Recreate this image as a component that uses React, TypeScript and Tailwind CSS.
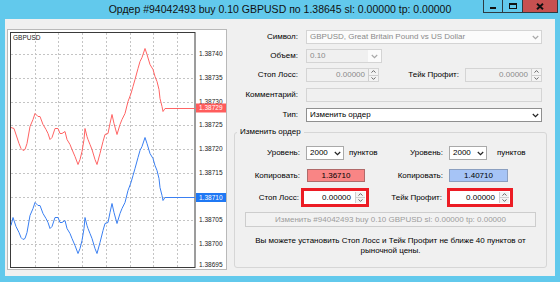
import type { ReactNode } from 'react';

// MT4 "modify order" dialog, scaled down

const blue: [number, number][] = [
    [11, 225], [13, 217], [16, 226], [19, 232], [21, 237], [23, 239], [25, 238], [27, 232],
    [30, 215], [33, 208], [35, 202], [38, 205], [40, 205], [43, 213], [46, 218], [48, 222],
    [50, 228], [52, 226], [55, 217], [58, 217], [60, 222], [62, 222], [65, 220], [67, 228],
    [70, 233], [72, 238], [75, 245], [78, 253], [80, 248], [82, 240], [84, 228], [85, 217],
    [87, 225], [88, 228], [90, 233], [92, 238], [95, 248], [97, 253], [100, 242], [103, 230],
    [105, 223], [108, 222], [110, 212], [112, 203], [114, 212], [117, 223], [120, 213],
    [122, 208], [125, 202], [128, 190], [131, 182], [133, 175], [135, 168], [138, 157],
    [140, 150], [142, 146], [145, 137], [147, 143], [150, 153], [153, 158], [155, 165],
    [157, 170], [159, 178], [160, 187], [162, 195], [163, 200], [165, 197], [195, 197],
];

const red: [number, number][] = [[11, 127], [14, 128], ...blue.slice(3).map(([x, y]) => [x, y - 89] as [number, number])];

const toPath = (pts: [number, number][]) =>
    pts.map(([x, y], i) => `${i === 0 ? 'M' : 'L'}${x} ${y + 0.5}`).join(' ');

const vLines = [35, 58, 82, 106, 130, 153, 177];
const hLines: [number, string][] = [
    [54, '1.38740'],
    [78, '1.38735'],
    [102, '1.38730'],
    [125, '1.38725'],
    [149, '1.38720'],
    [173, '1.38715'],
    [197, ''],
    [220, '1.38705'],
    [244, '1.38700'],
];

function ChartPanel() {
    return (
        <div className="ml-[2px] mt-[10px] h-[241px] w-[220px] border border-[#b9b9b9] bg-white">
            <svg width="218" height="239" viewBox="0 0 218 239" className="block">
                <g transform="translate(-8 -30)" fontFamily="'Liberation Sans', Arial, sans-serif" fontSize="6.5">
                    {vLines.map((x) => (
                        <line key={x} x1={x + 0.5} y1={33} x2={x + 0.5} y2={267} stroke="#c4c4c4" strokeDasharray="2 2" />
                    ))}
                    {hLines.map(([y]) => (
                        <line key={y} x1={11} y1={y + 0.5} x2={195} y2={y + 0.5} stroke="#c4c4c4" strokeDasharray="2 2" />
                    ))}
                    <rect x={10.5} y={32.5} width={184.5} height={235} fill="none" stroke="#3a3a3a" />
                    {hLines.map(([y, label]) =>
                        label ? (
                            <text key={label} x={199} y={y + 2.4} fill="#222">
                                {label}
                            </text>
                        ) : null,
                    )}
                    <text x={199} y={267.4} fill="#222">1.38695</text>
                    <text x={13} y={39.5} fill="#222">GBPUSD</text>

                    <path d={toPath(red)} fill="none" stroke="#ff6464" strokeWidth="1" />
                    <path d={toPath(blue)} fill="none" stroke="#3a7ff2" strokeWidth="1" />

                    <rect x={196} y={103.5} width={30} height={9} fill="#ff5c5c" />
                    <text x={199} y={110.4} fill="#fff">1.38729</text>
                    <rect x={196} y={193} width={30} height={9} fill="#1f78f4" />
                    <text x={199} y={199.9} fill="#fff">1.38710</text>
                </g>
            </svg>
        </div>
    );
}

function Chevron({ color = '#333' }: { color?: string }) {
    return (
        <svg width="7" height="5" viewBox="0 0 7 5">
            <path d="M0.8 1 L3.5 3.7 L6.2 1" fill="none" stroke={color} strokeWidth="1.2" />
        </svg>
    );
}

function Arrow({ up }: { up?: boolean }) {
    return (
        <svg width="5" height="3" viewBox="0 0 5 3">
            <path d={up ? 'M0.5 2.6 L2.5 0.6 L4.5 2.6' : 'M0.5 0.4 L2.5 2.4 L4.5 0.4'} fill="none" stroke="#555" strokeWidth="0.9" />
        </svg>
    );
}

function Spinner() {
    return (
        <div className="flex h-full w-[10px] flex-col border-l border-[#cfcfcf]">
            <div className="flex flex-1 items-center justify-center border-b border-[#cfcfcf] bg-[#f3f3f3]">
                <Arrow up />
            </div>
            <div className="flex flex-1 items-center justify-center bg-[#f3f3f3]">
                <Arrow />
            </div>
        </div>
    );
}

function Label({ children, w }: { children: ReactNode; w: string }) {
    return <div className={`${w} shrink-0 whitespace-nowrap text-right`}>{children}</div>;
}

function TitleBar() {
    return (
        <div className="grid h-[19px] grid-cols-[1fr_auto_1fr] items-center">
            <div />
            <div className="whitespace-nowrap pb-[1px] text-[10.5px] leading-none text-[#111]">
                Ордер #94042493 buy 0.10 GBPUSD по 1.38645 sl: 0.00000 tp: 0.00000
            </div>
            <div className="flex justify-end self-start pr-[2px]">
                <div className="flex h-[13px] w-[20px] items-end justify-center border border-t-0 border-[#2e3b42] pb-[3px]">
                    <div className="h-[2px] w-[6px] bg-[#111]" />
                </div>
                <div className="flex h-[13px] w-[20px] items-center justify-center border-b border-r border-[#2e3b42]">
                    <div className="h-[6px] w-[8px] border border-t-2 border-[#111]" />
                </div>
                <div className="flex h-[13px] w-[35px] items-center justify-center border-b border-r border-[#2e3b42] bg-[#c75050]">
                    <svg width="8" height="7" viewBox="0 0 8 7">
                        <path d="M1 0.8 L7 6.2 M7 0.8 L1 6.2" stroke="#111" strokeWidth="1.9" />
                    </svg>
                </div>
            </div>
        </div>
    );
}

function OrderForm() {
    return (
        <div className="flex flex-1 flex-col text-[8px] leading-none">
            <div className="mt-[11px] flex h-[14px] items-center">
                <Label w="w-[71px]">Символ:</Label>
                <div className="ml-[8px] flex h-full w-[236px] items-center justify-between border border-[#d4d4d4] bg-[#fbfbfb] pl-[3px] pr-[2px] text-[#8a8a8a]">
                    <span>GBPUSD, Great Britain Pound vs US Dollar</span>
                    <Chevron color="#a8a8a8" />
                </div>
            </div>

            <div className="mt-[5px] flex h-[14px] items-center">
                <Label w="w-[71px]">Объем:</Label>
                <div className="ml-[8px] flex h-full w-[76px] items-center border border-[#d4d4d4] bg-[#fbfbfb] text-[#8a8a8a]">
                    <div className="flex h-full flex-1 items-center bg-[#f0f0f0] pl-[3px]">0.10</div>
                    <div className="flex h-full w-[13px] items-center justify-center">
                        <Chevron color="#a8a8a8" />
                    </div>
                </div>
            </div>

            <div className="mt-[5px] flex h-[14px] items-center">
                <Label w="w-[71px]">Стоп Лосс:</Label>
                <div className="ml-[8px] flex h-full w-[73px] items-center border border-[#d4d4d4] bg-[#f0f0f0] text-[#8a8a8a]">
                    <div className="flex-1 pr-[3px] text-right">0.00000</div>
                    <Spinner />
                </div>
                <Label w="w-[80px]">Тейк Профит:</Label>
                <div className="ml-[6px] flex h-full w-[77px] items-center border border-[#d4d4d4] bg-[#f0f0f0] text-[#8a8a8a]">
                    <div className="flex-1 pr-[3px] text-right">0.00000</div>
                    <Spinner />
                </div>
            </div>

            <div className="mt-[6px] flex h-[14px] items-center">
                <Label w="w-[71px]">Комментарий:</Label>
                <div className="ml-[8px] h-full w-[236px] border border-[#d4d4d4] bg-[#f0f0f0]" />
            </div>

            <div className="mt-[6px] flex h-[14px] items-center">
                <Label w="w-[71px]">Тип:</Label>
                <div className="ml-[8px] flex h-full w-[236px] items-center justify-between border border-[#8f8f8f] bg-white pl-[3px] pr-[2px]">
                    <span>Изменить ордер</span>
                    <Chevron color="#222" />
                </div>
            </div>

            <fieldset className="ml-[7px] mt-[5px] w-[313px] rounded-[3px] border border-[#d6d6d6] pb-[11px]">
                <legend className="ml-[2px] px-[3px] leading-[10px]">Изменить ордер</legend>

                <div className="mt-[9px] flex h-[14px] items-center">
                    <div className="flex h-full w-[143px] items-center">
                        <Label w="w-[65px]">Уровень:</Label>
                        <div className="ml-[6px] flex h-full w-[38px] items-center justify-between border border-[#a9a9a9] bg-white pl-[3px] pr-[2px]">
                            <span>2000</span>
                            <Chevron color="#222" />
                        </div>
                        <span className="ml-[5px]">пунктов</span>
                    </div>
                    <Label w="w-[65px]">Уровень:</Label>
                    <div className="ml-[6px] flex h-full w-[38px] items-center justify-between border border-[#a9a9a9] bg-white pl-[3px] pr-[2px]">
                        <span>2000</span>
                        <Chevron color="#222" />
                    </div>
                    <span className="ml-[10px]">пунктов</span>
                </div>

                <div className="mt-[9px] flex h-[13px] items-center">
                    <div className="flex h-full w-[143px] items-center">
                        <Label w="w-[65px]">Копировать:</Label>
                        <div className="ml-[7px] flex h-full w-[58px] items-center justify-center border border-[#b06a6a] bg-[#f98585]">
                            1.36710
                        </div>
                    </div>
                    <Label w="w-[65px]">Копировать:</Label>
                    <div className="ml-[6px] flex h-full w-[59px] items-center justify-center border border-[#8b9fc0] bg-[#a6c4f6]">
                        1.40710
                    </div>
                </div>

                <div className="mt-[6px] flex h-[19px] items-center">
                    <div className="flex h-full w-[143px] items-center">
                        <Label w="w-[64px]">Стоп Лосс:</Label>
                        <div className="ml-[2px] flex h-full w-[68px] border-[3px] border-[#ec1c24] bg-white p-[1px]">
                            <div className="flex-1 self-center pr-[4px] text-right">0.00000</div>
                            <Spinner />
                        </div>
                    </div>
                    <Label w="w-[64px]">Тейк Профит:</Label>
                    <div className="ml-[5px] flex h-full w-[66px] border-[3px] border-[#ec1c24] bg-white p-[1px]">
                        <div className="flex-1 self-center pr-[4px] text-right">0.00000</div>
                        <Spinner />
                    </div>
                </div>

                <div className="mx-auto mt-[5px] flex h-[15px] w-[291px] items-center justify-center border border-[#cdcdcd] bg-[#f2f2f2] text-[#9c9c9c]">
                    Изменить #94042493 buy 0.10 GBPUSD sl: 0.00000 tp: 0.00000
                </div>

                <p className="mt-[9px] text-center leading-[10px]">
                    Вы можете установить Стоп Лосс и Тейк Профит не ближе 40 пунктов от
                    <br />
                    рыночной цены.
                </p>
            </fieldset>
        </div>
    );
}

export default function App() {
    return (
        <div className="flex h-[282px] w-[560px] flex-col bg-[#62c9ec] font-['Liberation_Sans',Arial,sans-serif] text-black">
            <TitleBar />
            <div className="mx-[5px] mb-[6px] flex flex-1 bg-[#f0f0f0]">
                <ChartPanel />
                <OrderForm />
            </div>
        </div>
    );
}
